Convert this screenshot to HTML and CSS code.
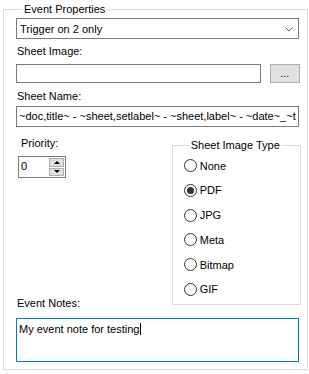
FILE: index.html
```html
<!DOCTYPE html>
<html lang="en">
<head>
  <meta charset="UTF-8" />
  <title>Event Properties</title>
  <link rel="stylesheet" href="styles.css">
</head>
<body>

<!-- Event Properties group -->
<fieldset class="group">
  <legend>Event Properties</legend>

  <div class="combo">
    <span>Trigger on 2 only</span>
    <svg class="chevron" width="8" height="5" viewBox="0 0 8 5"><path d="M0.5 0.5 L4 4 L7.5 0.5" fill="none" stroke="#606060" stroke-width="1"/></svg>
  </div>

  <div class="label">Sheet Image:</div>
  <div class="row">
    <div class="textbox grow"></div>
    <button class="btn">...</button>
  </div>

  <div class="label name-label">Sheet Name:</div>
  <div class="textbox name-box">~doc,title~ - ~sheet,setlabel~ - ~sheet,label~ - ~date~_~t</div>

  <div class="columns">
    <div class="left">
      <div class="label priority-label">Priority:</div>
      <div class="spin">
        <div class="spin-value">0</div>
        <div class="spin-buttons">
          <div class="spin-btn"><span class="tri-up"></span></div>
          <div class="spin-btn"><span class="tri-down"></span></div>
        </div>
      </div>
      <div class="label notes-label">Event Notes:</div>
    </div>

    <fieldset class="group inner">
      <legend>Sheet Image Type</legend>
      <div class="radio"><span class="dot"></span>None</div>
      <div class="radio"><span class="dot checked"></span>PDF</div>
      <div class="radio"><span class="dot"></span>JPG</div>
      <div class="radio"><span class="dot"></span>Meta</div>
      <div class="radio"><span class="dot"></span>Bitmap</div>
      <div class="radio"><span class="dot"></span>GIF</div>
    </fieldset>
  </div>

  <div class="notes"><span class="caret">My event note for testing</span></div>
</fieldset>

</body>
</html>
```

FILE: styles.css
```css
* {
  margin: 0;
  padding: 0;
  box-sizing: border-box;
}

body {
  font-family: "Liberation Sans", Arial, sans-serif;
  font-size: 11px;
  color: #000;
  background: #fff;
  width: 309px;
  height: 374px;
  overflow: hidden;
}

.group {
  border: 1px solid #dcdcdc;
  margin: 3px 5px 0 3px;
  padding: 2px 8px 7px 12px;
}

.group legend {
  padding: 0 1px;
  margin-left: 7px;
  line-height: 13px;
}

.combo {
  height: 21px;
  border: 1px solid #7a7a7a;
  display: flex;
  align-items: center;
  justify-content: space-between;
  padding: 0 5px 0 3px;
}

.chevron {
  margin-top: 1px;
}

.label {
  margin: 6px 0 0 1px;
  height: 13px;
  line-height: 13px;
}

.row {
  display: flex;
  margin-top: 6px;
  gap: 9px;
}

.textbox {
  height: 19px;
  border: 1px solid #7a7a7a;
  padding: 0 2px;
  line-height: 17px;
  white-space: nowrap;
  overflow: hidden;
}

.grow {
  flex: 1;
}

.btn {
  width: 30px;
  height: 19px;
  margin-right: -1px;
  background: #e1e1e1;
  border: 1px solid #adadad;
  font: inherit;
  line-height: 13px;
}

.name-label {
  margin-top: 7px;
}

.name-box {
  height: 21px;
  line-height: 19px;
  margin-top: 3px;
}

.columns {
  display: flex;
  justify-content: space-between;
  margin-top: 10px;
}

.left {
  display: flex;
  flex-direction: column;
  padding-left: 2px;
}

.priority-label {
  margin: 0 0 0 3px;
}

.spin {
  display: flex;
  width: 48px;
  height: 22px;
  border: 1px solid #7a7a7a;
  margin-top: 6px;
}

.spin-value {
  flex: 1;
  padding-left: 2px;
  line-height: 19px;
}

.spin-buttons {
  display: flex;
  flex-direction: column;
  width: 17px;
  padding: 1px;
  gap: 1px;
}

.spin-btn {
  flex: 1;
  background: #e1e1e1;
  border: 1px solid #adadad;
  display: flex;
  align-items: center;
  justify-content: center;
}

.tri-up {
  border-left: 3px solid transparent;
  border-right: 3px solid transparent;
  border-bottom: 3px solid #000;
}

.tri-down {
  border-left: 3px solid transparent;
  border-right: 3px solid transparent;
  border-top: 3px solid #000;
}

.notes-label {
  margin: auto 0 -5px -1px;
}

.group.inner {
  margin: 2px -2px 0 0;
  width: 129px;
  height: 166px;
  padding: 7px 0 0 11px;
}

.group.inner legend {
  margin-left: 6px;
}

.radio {
  display: flex;
  align-items: center;
  height: 13px;
  margin-bottom: 11.8px;
  gap: 3px;
}

.dot {
  width: 13px;
  height: 13px;
  border: 1px solid #333;
  border-radius: 50%;
  display: flex;
  align-items: center;
  justify-content: center;
}

.dot.checked::after {
  content: "";
  width: 7px;
  height: 7px;
  border-radius: 50%;
  background: #333;
}

.notes {
  height: 44px;
  border: 1px solid #0078d7;
  margin-top: 13px;
  padding: 3px 2px;
  line-height: 14px;
}

.caret {
  border-right: 1px solid #000;
  padding-right: 1px;
}
```
